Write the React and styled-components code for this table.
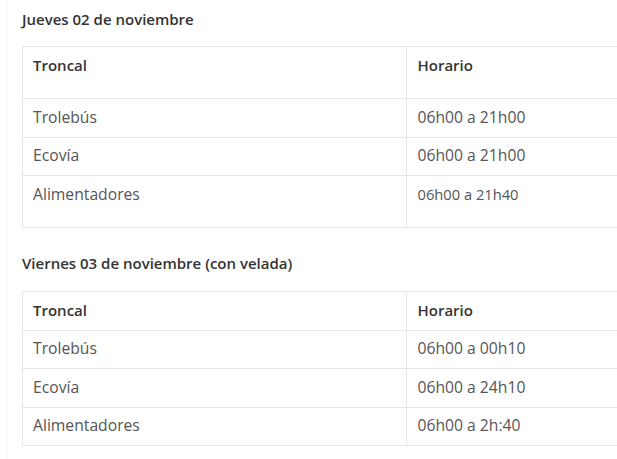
import React from "react";
import styled, { createGlobalStyle } from "styled-components";

const Global = createGlobalStyle`
  html, body { margin: 0; padding: 0; background: #fff; overflow: hidden; }
  body { font-family: "Open Sans", "Liberation Sans", sans-serif; }
`;

const Page = styled.div`
  width: 617px;
  height: 459px;
  overflow: hidden;
  box-sizing: border-box;
  margin-left: 6px;
  border-left: 1px solid #f3f3f3;
  padding: 8.5px 0 0 15px;
`;

const Section = styled.section`
  display: flex;
  flex-direction: column;
  align-items: flex-start;
  margin-bottom: ${(p) => p.$gap || 0}px;
`;

const Heading = styled.h3`
  margin: 0 0 ${(p) => p.$below}px 0;
  font-size: 15px;
  line-height: 21px;
  font-weight: 600;
  color: #333;
`;

const Table = styled.table`
  width: 768px;
  table-layout: fixed;
  border-collapse: collapse;
  flex-shrink: 0;
  line-height: 22.5px;
`;

const Cell = styled.td`
  border: 1px solid #e6e6e6;
  padding: 6.5px 10px ${(p) => (p.$tall ? 22 : 8.5)}px 10px;
  vertical-align: top;
  text-align: left;
  color: ${(p) => (p.$head ? "#333" : "#555")};
  font-weight: ${(p) => (p.$head ? 600 : 400)};
  font-size: ${(p) => (p.$head ? 15 : p.$small ? 14.7 : 15.7)}px;
  &:nth-child(2) {
    padding-left: 11px;
  }
`;

const days = [
  {
    title: "Jueves 02 de noviembre",
    tallHead: true,
    rows: [
      ["Trolebús", "06h00 a 21h00"],
      ["Ecovía", "06h00 a 21h00"],
      ["Alimentadores", "06h00 a 21h40", true],
    ],
  },
  {
    title: "Viernes 03 de noviembre (con velada)",
    tallHead: false,
    rows: [
      ["Trolebús", "06h00 a 00h10"],
      ["Ecovía", "06h00 a 24h10"],
      ["Alimentadores", "06h00 a 2h:40"],
    ],
  },
];

export default function App() {
  return (
    <>
      <Global />
      <Page>
        {days.map((d, i) => (
          <Section key={d.title} $gap={i === 0 ? 25 : 0}>
            <Heading $below={i === 0 ? 16.5 : 17}>{d.title}</Heading>
            <Table>
              <tbody>
                <tr>
                  <Cell $head $tall={d.tallHead}>Troncal</Cell>
                  <Cell $head $tall={d.tallHead}>Horario</Cell>
                </tr>
                {d.rows.map(([a, b, tall]) => (
                  <tr key={a}>
                    <Cell $tall={tall}>{a}</Cell>
                    <Cell $tall={tall} $small={tall}>{b}</Cell>
                  </tr>
                ))}
              </tbody>
            </Table>
          </Section>
        ))}
      </Page>
    </>
  );
}
